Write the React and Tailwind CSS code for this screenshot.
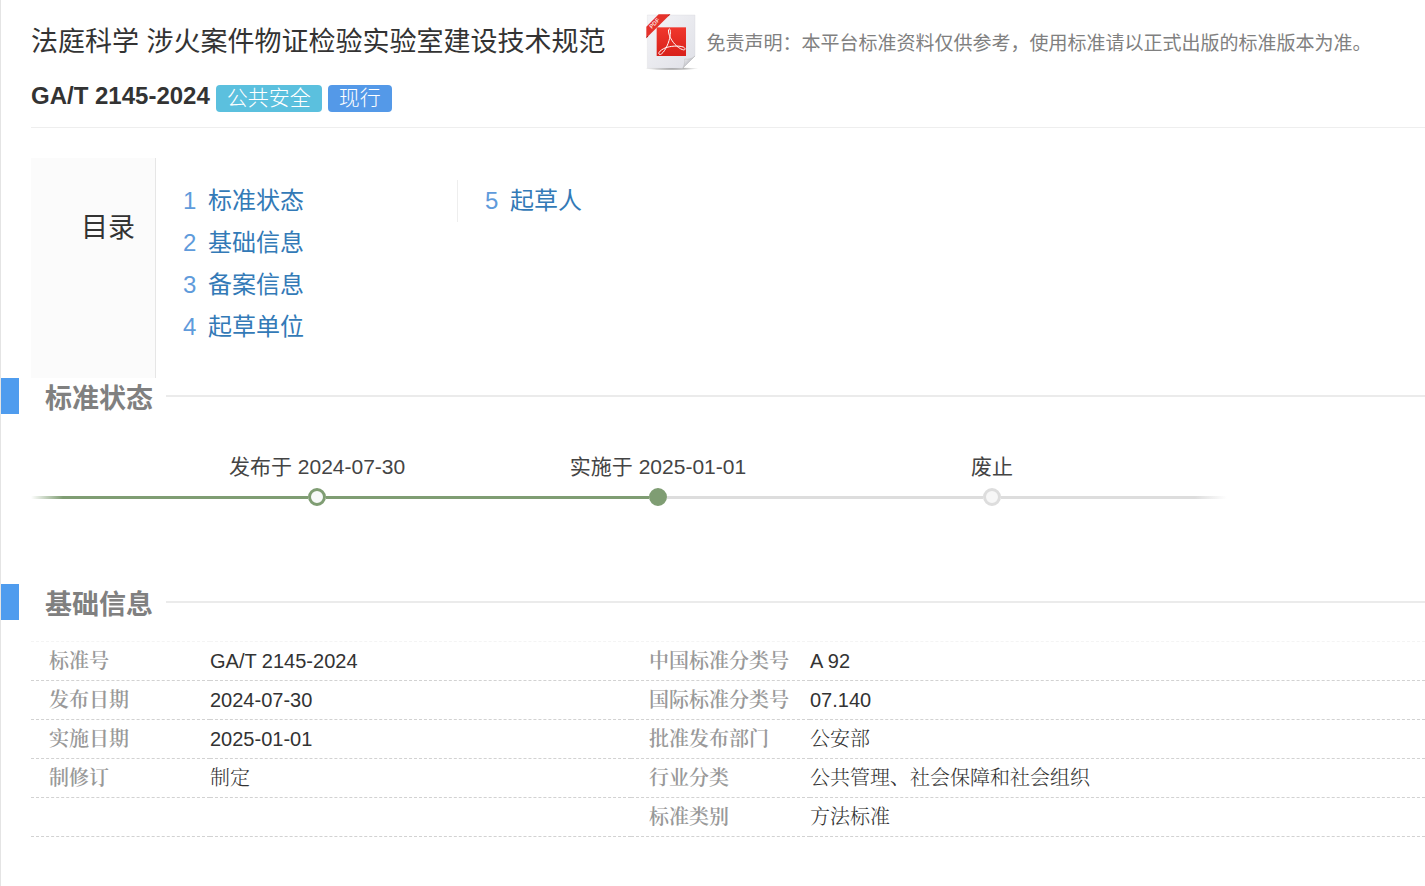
import React from 'react';

const TOC = [
  ['标准状态', '基础信息', '备案信息', '起草单位'],
  ['起草人'],
];

const ROWS = [
  ['标准号', 'GA/T 2145-2024', '中国标准分类号', 'A 92'],
  ['发布日期', '2024-07-30', '国际标准分类号', '07.140'],
  ['实施日期', '2025-01-01', '批准发布部门', '公安部'],
  ['制修订', '制定', '行业分类', '公共管理、社会保障和社会组织'],
  ['', '', '标准类别', '方法标准'],
];

export default function App() {
  return (
    <div className="min-h-screen border-l border-[#e4e4e4] bg-white pb-12 font-['Liberation_Sans','Noto_Sans_CJK_SC',sans-serif] text-[#333]">
      <header className="ml-[30px] border-b border-[#eee] pt-3 pb-[15px]">
        <div className="flex items-center">
          <h1 className="text-[27px] leading-[60px] whitespace-nowrap">法庭科学 涉火案件物证检验实验室建设技术规范</h1>
          <a href="#pdf" aria-label="PDF" className="ml-[39px] shrink-0">
            <PdfIcon />
          </a>
          <p className="ml-2 pt-1 text-[19px] whitespace-nowrap text-[#808080]">
            免责声明：本平台标准资料仅供参考，使用标准请以正式出版的标准版本为准。
          </p>
        </div>
        <div className="mt-2 flex items-end gap-1.5">
          <h2 className="text-2xl leading-[32px] font-bold">GA/T 2145-2024</h2>
          <Tag className="bg-[#5bc0de]">公共安全</Tag>
          <Tag className="bg-[#5499e8]">现行</Tag>
        </div>
      </header>

      <nav className="mt-[30px] ml-[30px] flex h-[220px]">
        <h2 className="w-[125px] border-r border-[#e6e6e6] bg-[#fbfbfb] pt-12 pl-[50px] text-[27px] leading-[44px]">目录</h2>
        <div className="flex items-start pt-[22px]">
          <TocList items={TOC[0]} start={1} className="w-[301px]" />
          <TocList items={TOC[1]} start={5} className="border-l border-[#eee]" />
        </div>
      </nav>

      <section>
        <SectionTitle>标准状态</SectionTitle>
        <ol className="mt-[37px] ml-[30px] grid w-[84%] grid-cols-[116fr_342fr_342fr_328fr_72fr] items-end text-[21px]">
          <li aria-hidden="true" className="flex h-[18px] items-center">
            <span className="h-[3px] w-8 bg-linear-to-r from-transparent to-[#7f9d73]" />
            <span className="h-[3px] flex-1 bg-[#7f9d73]" />
          </li>
          <Step label="发布于 2024-07-30" before="bg-[#7f9d73]" dot="border-[#7f9d73] bg-[#f7f9f9]" after="bg-[#7f9d73]" />
          <Step label="实施于 2025-01-01" before="bg-[#7f9d73]" dot="border-[#7f9d73] bg-[#7f9d73]" after="bg-[#ddd]" />
          <Step label="废止" before="bg-[#ddd]" dot="border-[#ddd] bg-[#f7f7f7]" after="bg-[#ddd]" />
          <li aria-hidden="true" className="flex h-[18px] items-center">
            <span className="h-[3px] flex-1 bg-[#ddd]" />
            <span className="h-[3px] w-8 bg-linear-to-l from-transparent to-[#ddd]" />
          </li>
        </ol>
      </section>

      <section className="mt-[78px]">
        <SectionTitle>基础信息</SectionTitle>
        <div className="mt-[21px] ml-[30px]">
          <table className="w-full table-fixed border-t border-dashed border-[#f4f4f4] text-left font-['Liberation_Sans','Noto_Serif_CJK_SC','Noto_Sans_CJK_SC',serif] text-xl">
            <colgroup>
              <col className="w-[179px]" />
              <col className="w-[421px]" />
              <col className="w-[179px]" />
              <col />
            </colgroup>
            <tbody>
              {ROWS.map(([k1, v1, k2, v2]) => (
                <tr key={k2} className="h-[39px] border-b border-dashed border-[#d2d2d2]">
                  <th scope="row" className="pl-[18px] font-semibold text-[#999]">{k1}</th>
                  <td className="font-light">{v1}</td>
                  <th scope="row" className="pl-[18px] font-semibold whitespace-nowrap text-[#999]">{k2}</th>
                  <td className="font-light">{v2}</td>
                </tr>
              ))}
            </tbody>
          </table>
        </div>
      </section>
    </div>
  );
}

function Tag({ className, children }) {
  return <span className={`h-[27px] rounded px-[11px] text-[21px] leading-[26px] font-light text-white ${className}`}>{children}</span>;
}

function TocList({ items, start, className }) {
  return (
    <ol className={`pl-[27px] text-2xl leading-[42px] ${className}`}>
      {items.map((t, i) => (
        <li key={t} className="flex">
          <span className="w-[25px] text-[#5f9bdb]">{start + i}</span>
          <a href={`#${t}`} className="text-[#337ab7]">{t}</a>
        </li>
      ))}
    </ol>
  );
}

function SectionTitle({ children }) {
  return (
    <div className="flex items-center">
      <span className="h-9 w-[18px] bg-[#4f9cee]" />
      <h2 className="mr-[13px] ml-[26px] h-9 text-[27px] leading-[42px] font-bold text-[#808080]">{children}</h2>
      <span className="h-0.5 flex-1 bg-[#ebebeb]" />
    </div>
  );
}

function Step({ label, before, dot, after }) {
  return (
    <li>
      <div className="pb-[5px] text-center leading-8 text-[#444]">{label}</div>
      <div className="flex items-center">
        <span className={`h-[3px] flex-1 ${before}`} />
        <span className={`size-[18px] rounded-full border-3 ${dot}`} />
        <span className={`h-[3px] flex-1 ${after}`} />
      </div>
    </li>
  );
}

function PdfIcon() {
  return (
    <svg width="54" height="60" viewBox="0 0 162 180" fill="none">
      <defs>
        <linearGradient id="page" x1="0" y1="0" x2="1" y2="1">
          <stop offset="0" stopColor="#f4f4f7" />
          <stop offset="1" stopColor="#dfe0e7" />
        </linearGradient>
        <linearGradient id="red" x1="0" y1="0" x2="0" y2="1">
          <stop offset="0" stopColor="#f0372d" />
          <stop offset="1" stopColor="#d8201a" />
        </linearGradient>
        <linearGradient id="curl" x1="0" y1="0" x2="1" y2="1">
          <stop offset="0.1" stopColor="#ffffff" />
          <stop offset="0.5" stopColor="#c4c5cc" />
        </linearGradient>
        <radialGradient id="shadow">
          <stop offset="0" stopColor="#777" />
          <stop offset="1" stopColor="#777" stopOpacity="0" />
        </radialGradient>
      </defs>
      <ellipse cx="80" cy="170" rx="80" ry="5" fill="url(#shadow)" />
      <path d="M7 9H150V132L113 169H7Z" fill="url(#page)" stroke="#d8d8de" strokeWidth="1" />
      <path d="M150 132C142 140 129 143 119 141C120 151 117 162 113 169Z" fill="url(#curl)" stroke="#aaa" strokeWidth="1" />
      <path d="M35 46H123V132H35Z" fill="url(#red)" />
      <path
        d="M43 127C37 122 49 113 60 108C76 102 99 100 115 105C123 109 121 116 113 113C96 107 81 90 73 70C70 60 69 52 73 51C78 51 77 68 72 86C66 107 51 131 43 127Z"
        stroke="#fff"
        strokeWidth="3"
      />
      <path d="M41 7H76L70 13L10 72L4 79V44Z" fill="#e5322b" />
      <path d="M76 7L70 13V9Z M4 79L10 72H6Z" fill="#9d1914" />
      <text x="20" y="51" transform="rotate(-45 20 51)" fontSize="18" fontWeight="700" fill="#fbdcda">PDF</text>
    </svg>
  );
}
